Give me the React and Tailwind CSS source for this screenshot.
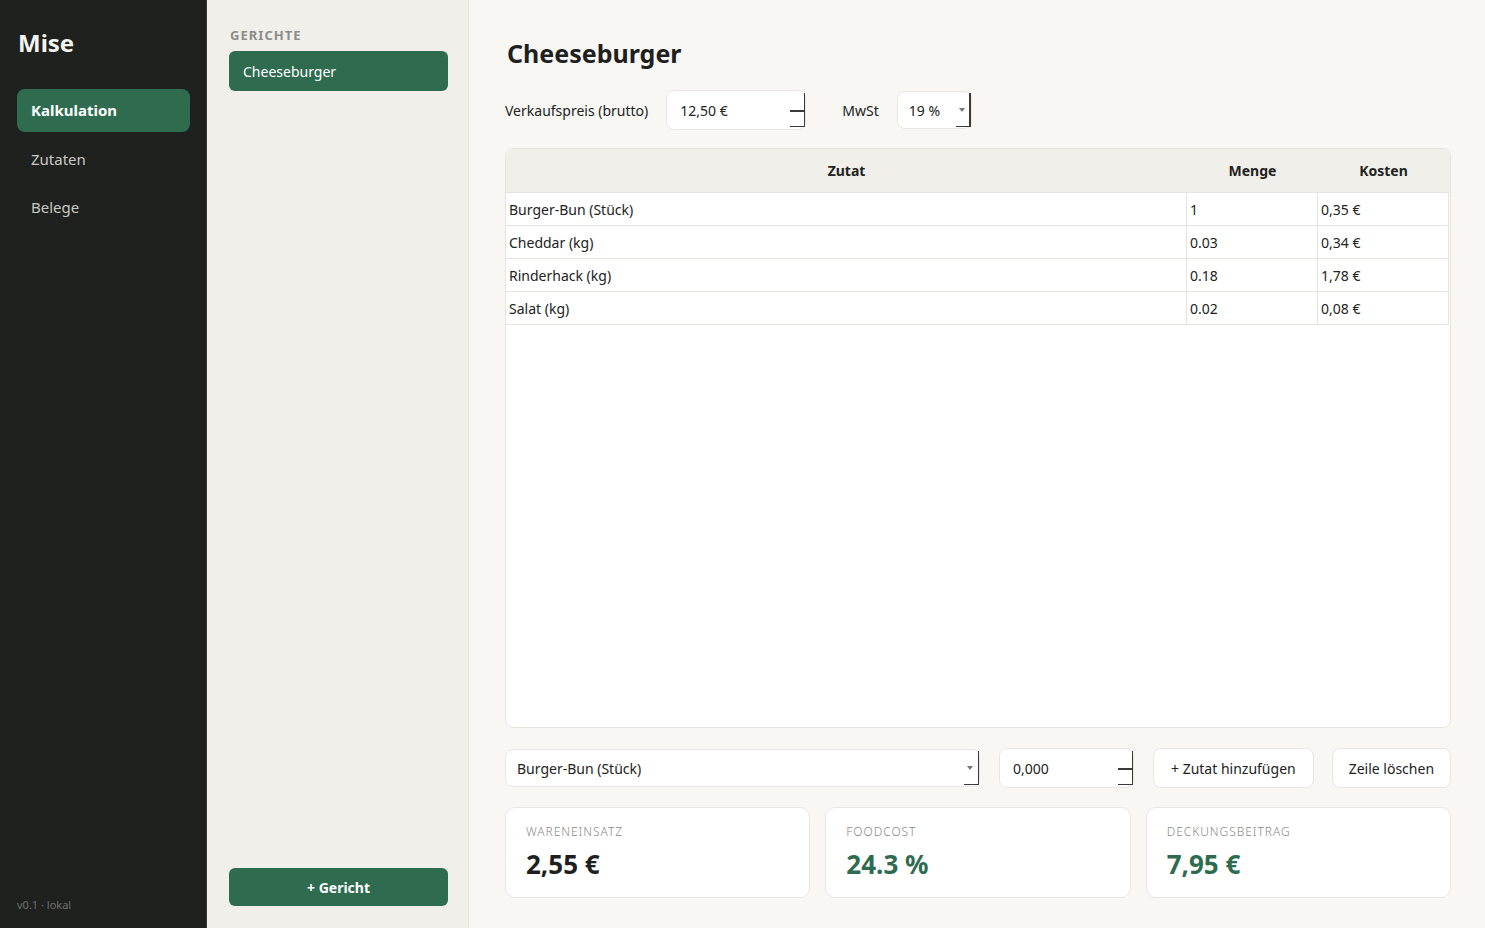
import React from "react";

const rows = [
    { name: "Burger-Bun (Stück)", menge: "1", kosten: "0,35 €" },
    { name: "Cheddar (kg)", menge: "0.03", kosten: "0,34 €" },
    { name: "Rinderhack (kg)", menge: "0.18", kosten: "1,78 €" },
    { name: "Salat (kg)", menge: "0.02", kosten: "0,08 €" },
];

function SpinBox({ value, className }) {
    return (
        <div className={"relative h-[40px] bg-white border border-[#e9e7e2] rounded-[8px] flex items-center pl-[13px] text-[14px] text-[#222] " + className}>
            {value}
            <div className="absolute right-[0px] top-[2px] bottom-[2px] w-[1.5px] bg-[#3a3a3a]" />
            <div className="absolute right-[0px] top-[19px] w-[15px] h-[1.5px] bg-[#3a3a3a]" />
            <div className="absolute right-[0px] bottom-[2px] w-[15px] h-[1.5px] bg-[#3a3a3a]" />
        </div>
    );
}

function ComboBox({ value, className }) {
    return (
        <div className={"relative h-[38px] bg-white border border-[#e9e7e2] rounded-[8px] flex items-center pl-[11px] text-[14px] text-[#222] " + className}>
            {value}
            <div className="absolute right-[6px] top-[16px] w-0 h-0 border-l-[3.5px] border-r-[3.5px] border-t-[4px] border-l-transparent border-r-transparent border-t-[#777]" />
            <div className="absolute right-[0px] top-[1px] bottom-[1px] w-[1.5px] bg-[#3a3a3a]" />
            <div className="absolute right-[0px] bottom-[1px] w-[15px] h-[1.5px] bg-[#3a3a3a]" />
        </div>
    );
}

function Card({ label, value, green }) {
    return (
        <div className="flex-1 h-[91px] bg-white border border-[#e9e7e2] rounded-[10px] pl-[20px] pt-[16px]">
            <div className="text-[12px] tracking-[0.08em] text-[#8a8a85] font-light leading-[16px]">{label}</div>
            <div className={"text-[26px] font-bold leading-[34px] mt-[7px] " + (green ? "text-[#2e6b4f]" : "text-[#1f1f1f]")}>{value}</div>
        </div>
    );
}

export default function App() {
    return (
        <div className="flex h-screen w-full font-['Noto_Sans',sans-serif] overflow-hidden">

            <div className="w-[207px] shrink-0 bg-[#1f211f] flex flex-col pl-[17px] pr-[16px] pt-[28px] pb-[16px] border-r border-[#3a3c3a]">
                <div className="text-[24px] font-bold text-[#f4f4f0] leading-[30px] pl-[1px]">Mise</div>
                <div className="mt-[31px] flex flex-col">
                    <div className="h-[43px] rounded-[8px] bg-[#2e6b4f] text-white font-bold text-[15px] flex items-center pl-[14px]">Kalkulation</div>
                    <div className="h-[48px] mt-[3px] text-[15px] text-[#c9c9c4] flex items-center pl-[14px]">Zutaten</div>
                    <div className="h-[48px] text-[15px] text-[#c9c9c4] flex items-center pl-[14px]">Belege</div>
                </div>
                <div className="mt-auto text-[11px] text-[#6e706c] leading-[14px]">v0.1 · lokal</div>
            </div>

            <div className="w-[262px] shrink-0 bg-[#f1efea] flex flex-col pl-[22px] pr-[20px] pt-[26px] pb-[22px] border-r border-[#e6e4de]">
                <div className="text-[13px] font-bold tracking-[0.08em] text-[#8c8c88] leading-[18px] pl-[1px]">GERICHTE</div>
                <div className="mt-[7px] h-[40px] rounded-[6px] bg-[#2e6b4f] text-white text-[14px] flex items-center pl-[14px]">Cheeseburger</div>
                <div className="mt-auto h-[38px] rounded-[6px] bg-[#2e6b4f] text-white text-[14px] font-bold flex items-center justify-center">+ Gericht</div>
            </div>

            <div className="flex-1 bg-[#f8f7f4] flex flex-col pl-[36px] pr-[34px] pt-[35px] pb-[30px]">
                <h1 className="text-[25px] font-bold text-[#1f1f1f] leading-[36px] pl-[2px]">Cheeseburger</h1>

                <div className="mt-[19px] flex items-center">
                    <span className="text-[14px] text-[#222]">Verkaufspreis (brutto)</span>
                    <SpinBox value="12,50 €" className="ml-[18px] w-[140px]" />
                    <span className="ml-[36px] text-[14px] text-[#222]">MwSt</span>
                    <ComboBox value="19 %" className="ml-[18px] w-[75px]" />
                </div>

                <div className="mt-[18px] flex-1 bg-white border border-[#e6e4de] rounded-[8px] overflow-hidden">
                    <div className="flex h-[44px] bg-[#f1efea] border-b border-[#e6e4de] text-[14px] font-bold text-[#222] items-center">
                        <div className="w-[681px] text-center">Zutat</div>
                        <div className="w-[131px] text-center">Menge</div>
                        <div className="w-[131px] text-center">Kosten</div>
                    </div>
                    {rows.map(row => (
                        <div key={row.name} className="flex h-[33px] border-b border-[#e6e4de] text-[14px] text-[#222] items-center w-[943px]">
                            <div className="w-[681px] h-full flex items-center pl-[3px] border-r border-[#e6e4de]">{row.name}</div>
                            <div className="w-[131px] h-full flex items-center pl-[3px] border-r border-[#e6e4de]">{row.menge}</div>
                            <div className="w-[131px] h-full flex items-center pl-[3px] border-r border-[#e6e4de]">{row.kosten}</div>
                        </div>
                    ))}
                </div>

                <div className="mt-[20px] flex items-center">
                    <ComboBox value="Burger-Bun (Stück)" className="w-[475px]" />
                    <SpinBox value="0,000" className="ml-[19px] w-[135px]" />
                    <div className="ml-[19px] h-[40px] px-[17px] bg-white border border-[#e9e7e2] rounded-[8px] flex items-center text-[14px] text-[#222]">+ Zutat hinzufügen</div>
                    <div className="ml-[18px] flex-1 h-[40px] bg-white border border-[#e9e7e2] rounded-[8px] flex items-center justify-center text-[14px] text-[#222]">Zeile löschen</div>
                </div>

                <div className="mt-[19px] flex gap-[15px]">
                    <Card label="WARENEINSATZ" value="2,55 €" />
                    <Card label="FOODCOST" value="24.3 %" green />
                    <Card label="DECKUNGSBEITRAG" value="7,95 €" green />
                </div>
            </div>
        </div>
    );
}
